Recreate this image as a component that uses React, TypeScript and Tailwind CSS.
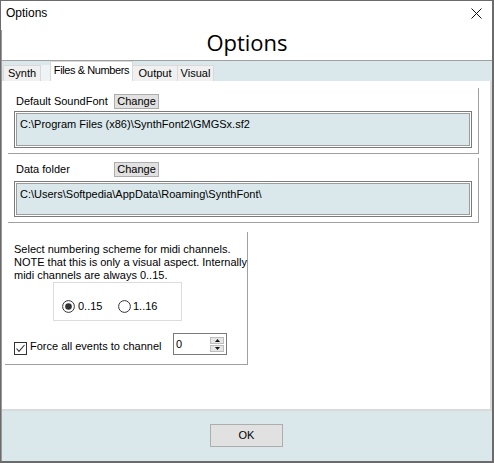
import React from "react";

function Radio({ checked }: { checked: boolean }) {
  return (
    <svg width="13" height="13" viewBox="0 0 13 13" className="shrink-0">
      <circle cx="6.5" cy="6.5" r="5.9" fill="#fff" stroke="#333" strokeWidth="1" />
      {checked && <circle cx="6.5" cy="6.5" r="3.3" fill="#333" />}
    </svg>
  );
}

function Check() {
  return (
    <svg width="13" height="13" viewBox="0 0 13 13" className="shrink-0">
      <rect x="0.5" y="0.5" width="12" height="12" fill="#fff" stroke="#333" strokeWidth="1" />
      <path d="M2.5 6.5 L5 9.3 L10.5 3" fill="none" stroke="#333" strokeWidth="1.1" />
    </svg>
  );
}

function Group({
  label,
  path,
  top,
  rowPt,
  boxMt,
  boxH,
}: {
  label: string;
  path: string;
  top: string;
  rowPt: string;
  boxMt: string;
  boxH: string;
}) {
  return (
    <div className={`ml-[6px] ${top} w-[471px] border-r border-b border-[#a0a0a0] pl-[6px] ${rowPt} pb-[5px]`}>
      <div className="flex items-center h-[15px]">
        <div className="w-[100px] pl-[2px] text-[11px] leading-[15px] whitespace-nowrap">{label}</div>
        <div className="w-[45px] h-[15px] bg-[#e1e1e1] border border-[#adadad] text-[11px] leading-[13px] text-center">
          Change
        </div>
      </div>
      <div className={`${boxMt} w-[458px] ${boxH} border border-[#7a7a7a] bg-white p-px`}>
        <div className="w-full h-full border border-[#9c9c9c] bg-[#dae8ec] pl-[3px] pt-[3px] text-[11px] leading-[15px] whitespace-nowrap">
          {path}
        </div>
      </div>
    </div>
  );
}

export default function App() {
  return (
    <div className="w-[494px] h-[463px] flex flex-col bg-white border-t border-l border-r-2 border-b-2 border-[#6b6b6b] text-black overflow-hidden font-['Liberation_Sans',Arial,sans-serif]">
      {/* Title bar */}
      <div className="h-[29px] flex justify-between items-start shrink-0">
        <div className="ml-[5px] mt-[5px] text-[12px] leading-[14px]">Options</div>
        <svg width="11" height="11" viewBox="0 0 11 11" className="mt-[7px] mr-[10px]">
          <path d="M0.5 0.5 L10.5 10.5 M10.5 0.5 L0.5 10.5" stroke="#111" strokeWidth="1" />
        </svg>
      </div>

      {/* Client */}
      <div className="flex-1 flex flex-col border-l border-[#9a9a9a]">
        {/* Header */}
        <div className="h-[31px] shrink-0 border-b border-[#a0a0a0] flex justify-center">
          <div className="font-['Open_Sans',sans-serif] text-[22px] leading-[22px] mt-px">Options</div>
        </div>

        {/* Tabs */}
        <div className="h-[20px] shrink-0 bg-[#dae8ec] flex items-end pl-px">
          <div className="w-[38px] h-[16px] bg-[#f0f0f0] border border-b-0 border-[#d9d9d9] text-[11px] leading-[15px] text-center whitespace-nowrap">
            Synth
          </div>
          <div className="w-[9px] h-[16px] bg-[#eef3f5]" />
          <div className="w-[83px] h-[20px] bg-white border border-b-0 border-[#d9d9d9] text-[11px] leading-[15px] text-center pt-px whitespace-nowrap tracking-[-0.4px]">
            Files &amp; Numbers
          </div>
          <div className="w-[45px] h-[16px] bg-[#f0f0f0] border border-b-0 border-l-0 border-[#d9d9d9] text-[11px] leading-[15px] text-center whitespace-nowrap">
            Output
          </div>
          <div className="w-[36px] h-[16px] bg-[#f0f0f0] border border-b-0 border-l-0 border-[#d9d9d9] text-[11px] leading-[15px] text-center whitespace-nowrap">
            Visual
          </div>
        </div>

        {/* Panel */}
        <div className="h-[330px] shrink-0 bg-white border-r-2 border-b-2 border-[#dadada] flex flex-col">
          <Group
            label="Default SoundFont"
            path={"C:\\Program Files (x86)\\SynthFont2\\GMGSx.sf2"}
            top="mt-[7px]"
            rowPt="pt-[6px]"
            boxMt="mt-[2px]"
            boxH="h-[37px]"
          />
          <Group
            label="Data folder"
            path={"C:\\Users\\Softpedia\\AppData\\Roaming\\SynthFont\\"}
            top="mt-[4px]"
            rowPt="pt-[4px]"
            boxMt="mt-[4px]"
            boxH="h-[36px]"
          />

          <div className="ml-[3px] mt-[9px] w-[243px] border-r border-b border-[#a0a0a0] pl-[9px] pt-[11px] pb-[9px]">
            <div className="text-[11px] leading-[13px] whitespace-nowrap">
              Select numbering scheme for midi channels.
              <br />
              NOTE that this is only a visual aspect. Internally
              <br />
              midi channels are always 0..15.
            </div>
            <div className="ml-[39px] w-[129px] h-[39px] border border-[#dcdcdc] flex items-start pt-[17px] pl-[8px]">
              <div className="w-[56px] flex items-center gap-[3px]">
                <Radio checked />
                <span className="text-[11px] leading-[13px]">0..15</span>
              </div>
              <div className="flex items-center gap-[2px]">
                <Radio checked={false} />
                <span className="text-[11px] leading-[13px]">1..16</span>
              </div>
            </div>
            <div className="mt-[12px] flex items-start">
              <div className="mt-[9px]">
                <Check />
              </div>
              <div className="ml-[3px] w-[143px] mt-[7px] text-[11px] leading-[13px] whitespace-nowrap">Force all events to channel</div>
              <div className="w-[54px] h-[22px] border border-[#7a7a7a] flex">
                <div className="pl-[2px] pt-[4px] text-[11px] leading-[13px]">0</div>
                <div className="ml-auto mr-[2px] mt-[3px] flex flex-col gap-px">
                  <div className="w-[14px] h-[7px] bg-[#e6e6e6] border border-[#bdbdbd] flex items-center justify-center">
                    <svg width="5" height="3" viewBox="0 0 5 3">
                      <path d="M2.5 0 L5 3 L0 3 Z" fill="#111" />
                    </svg>
                  </div>
                  <div className="w-[14px] h-[7px] bg-[#e6e6e6] border border-[#bdbdbd] flex items-center justify-center">
                    <svg width="5" height="3" viewBox="0 0 5 3">
                      <path d="M0 0 L5 0 L2.5 3 Z" fill="#111" />
                    </svg>
                  </div>
                </div>
              </div>
            </div>
          </div>
        </div>

        {/* Footer */}
        <div className="flex-1 bg-[#dae8ec] pt-[13px]">
          <div className="ml-[208px] w-[73px] h-[23px] bg-[#e1e1e1] border border-[#adadad] text-[11px] leading-[21px] text-center">
            OK
          </div>
        </div>
      </div>
    </div>
  );
}
